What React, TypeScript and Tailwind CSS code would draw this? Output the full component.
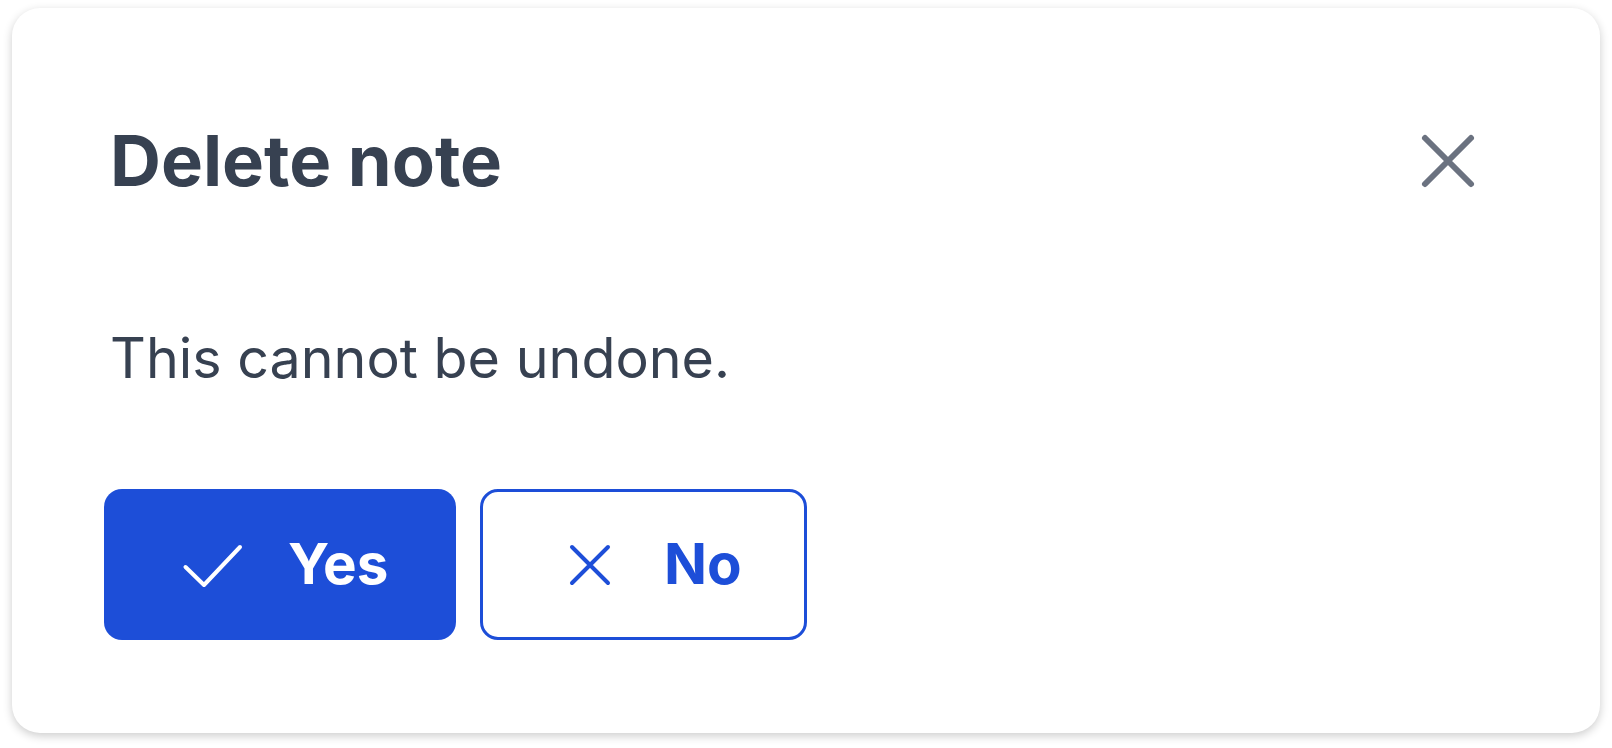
import React from 'react'

function CheckIcon() {
  return (
    <svg width="72" height="72" viewBox="0 0 72 72" fill="none" stroke="currentColor" strokeWidth="4" strokeLinecap="round" strokeLinejoin="round" className="shrink-0">
      <path d="M8.5 38 L27 56 L63 18" />
    </svg>
  )
}

function CrossIcon({ size = 72, inset = 18, width = 4 }: { size?: number; inset?: number; width?: number }) {
  const a = inset
  const b = size - inset
  return (
    <svg width={size} height={size} viewBox={`0 0 ${size} ${size}`} fill="none" stroke="currentColor" strokeWidth={width} strokeLinecap="round" className="shrink-0">
      <path d={`M${a} ${a} L${b} ${b} M${b} ${a} L${a} ${b}`} />
    </svg>
  )
}

export default function App() {
  return (
    <div className="min-h-screen bg-white pl-[12px] pt-[8px] font-['Inter',sans-serif]">
      <div className="w-[1588px] rounded-[28px] bg-white shadow-[0_3px_10px_rgba(0,0,0,0.2)] px-[92px] pt-[118px] pb-[93px]">
        {/* Header */}
        <div className="flex items-center justify-between">
          <h2 className="pl-[6px] text-[70.5px] leading-[70px] font-bold text-[#374151]">Delete note</h2>
          <button className="mr-[28px] text-[#6b7280]">
            <CrossIcon size={64} inset={9} width={6} />
          </button>
        </div>

        <p className="mt-[134px] pl-[6px] text-[55.6px] leading-[56px] text-[#374151]">This cannot be undone.</p>

        {/* Actions */}
        <div className="mt-[103px] flex gap-[24px]">
          <button className="flex h-[151px] w-[352px] items-center gap-[39px] rounded-[18px] bg-[#1d4ed8] pl-[73px] text-white">
            <CheckIcon />
            <span className="text-[56.5px] leading-none font-bold">Yes</span>
          </button>
          <button className="flex h-[151px] w-[327px] items-center gap-[38px] rounded-[18px] border-[3px] border-[#1d4ed8] bg-white pl-[71px] text-[#1d4ed8]">
            <CrossIcon />
            <span className="text-[56.5px] leading-none font-bold">No</span>
          </button>
        </div>
      </div>
    </div>
  )
}
